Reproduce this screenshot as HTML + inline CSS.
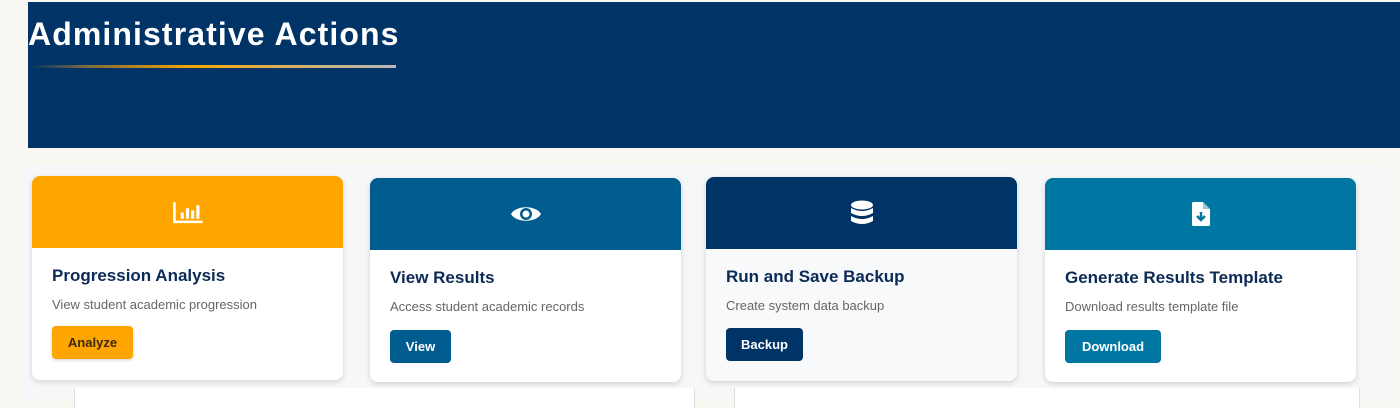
<!DOCTYPE html>
<html><head><style>
*{box-sizing:border-box;margin:0;padding:0}
body{width:1400px;height:400px;background:#f8f6f1;font-family:"Liberation Sans",sans-serif;position:relative;overflow:hidden}
.hdr{position:absolute;left:28px;top:2px;width:1372px;height:146px;background:#003366}
.hdr h1{position:absolute;left:0;top:14px;color:#fff;font-size:32px;font-weight:bold;letter-spacing:1.1px}
.hdr .ln{position:absolute;left:2px;top:63px;width:366px;height:3px;background:linear-gradient(90deg,#003366,#7a6a40 15%,#f5a800 45%,#d8b060 70%,#b8b8b8)}
.area{position:absolute;left:20px;top:166px;width:1370px;height:234px;background:#f5f7f9}
.panel{position:absolute;top:388px;height:20px;background:#fff;border-left:1px solid #ddd;border-right:1px solid #ddd}
.card{position:absolute;width:311px;height:204px;background:#fff;border-radius:8px;box-shadow:0 2px 6px rgba(0,0,0,.15);overflow:hidden}
.card .top{height:72px;display:flex;align-items:center;justify-content:center}
.card h2{position:absolute;left:20px;top:90px;font-size:17px;font-weight:bold;color:#0b2a55}
.card p{position:absolute;left:20px;top:121px;font-size:13px;color:#666}
.card .btn{position:absolute;left:20px;top:152px;height:33px;border-radius:4px;color:#fff;font-size:13px;font-weight:bold;display:flex;align-items:center;justify-content:center}
</style></head><body>
<div class="hdr"><h1>Administrative Actions</h1><div class="ln"></div></div>
<div class="area"></div>
<div class="panel" style="left:74px;width:621px"></div>
<div class="panel" style="left:734px;width:626px"></div>

<div class="card" style="left:32px;top:176px">
<div class="top" style="background:#ffa500"><svg width="32" height="25" viewBox="0 0 30 24"><path d="M2 2V21H29" stroke="#fff" stroke-width="2.5" fill="none"/><rect x="8" y="12" width="3" height="6" fill="#fff"/><rect x="13" y="8" width="3" height="10" fill="#fff"/><rect x="18" y="10" width="3" height="8" fill="#fff"/><rect x="23" y="5" width="3" height="13" fill="#fff"/></svg></div>
<h2>Progression Analysis</h2><p>View student academic progression</p>
<div class="btn" style="background:#ffa500;color:#3a2a10;width:81px;top:150px;box-shadow:0 1px 3px rgba(0,0,0,.2)">Analyze</div></div>

<div class="card" style="left:370px;top:178px">
<div class="top" style="background:#005b8f"><svg width="32" height="20" viewBox="0 0 32 20"><path d="M1 10C6 1 26 1 31 10C26 19 6 19 1 10Z" fill="#fff"/><circle cx="16" cy="10" r="6" fill="#005b8f"/><circle cx="16" cy="10" r="3.5" fill="#fff"/></svg></div>
<h2>View Results</h2><p>Access student academic records</p>
<div class="btn" style="background:#005b8f;width:61px">View</div></div>

<div class="card" style="left:706px;top:177px;background:#f7f9fb">
<div class="top" style="background:#003366"><svg width="24" height="26" viewBox="0 0 24 26"><ellipse cx="12" cy="5" rx="11" ry="4.5" fill="#fff"/><path d="M1 8Q12 14 23 8V13Q12 19 1 13Z" fill="#fff"/><path d="M1 16Q12 22 23 16V21Q12 27 1 21Z" fill="#fff"/></svg></div>
<h2>Run and Save Backup</h2><p>Create system data backup</p>
<div class="btn" style="background:#003366;width:77px;top:151px">Backup</div></div>

<div class="card" style="left:1045px;top:178px">
<div class="top" style="background:#0077a3"><svg width="18" height="24" viewBox="0 0 18 24"><path d="M0 1.5Q0 0 1.5 0H11L18 7V22.5Q18 24 16.5 24H1.5Q0 24 0 22.5Z" fill="#fff"/><path d="M11 0V7H18" fill="#0077a3" opacity=".4"/><path d="M9 10V18M5 14L9 18L13 14" stroke="#0077a3" stroke-width="2.5" fill="none"/></svg></div>
<h2>Generate Results Template</h2><p>Download results template file</p>
<div class="btn" style="background:#0077a3;width:96px">Download</div></div>
</body></html>
